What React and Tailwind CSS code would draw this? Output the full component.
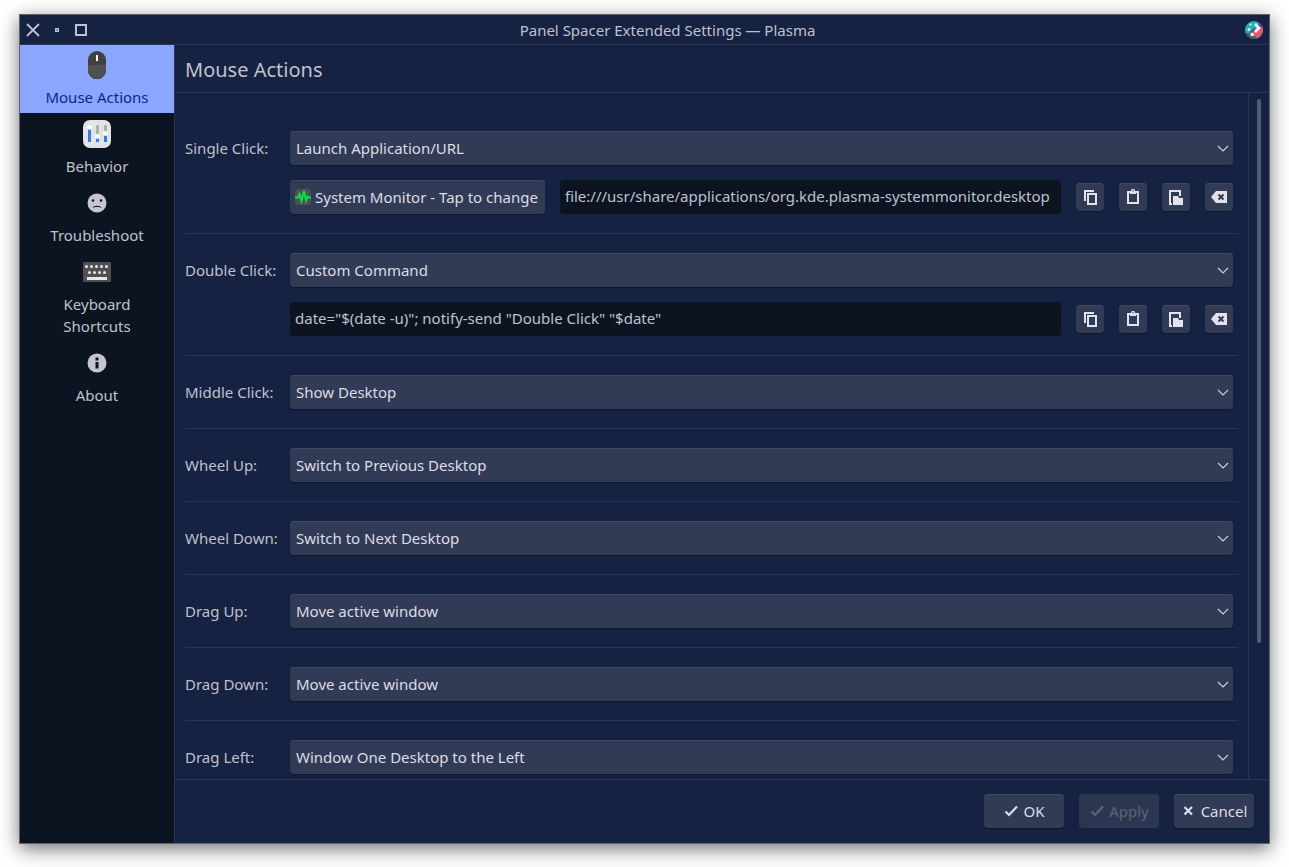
import React, { useState } from 'react';

const pages = [
  { id: 'mouse', label: 'Mouse Actions', icon: MouseIcon },
  { id: 'behavior', label: 'Behavior', icon: SlidersIcon },
  { id: 'troubleshoot', label: 'Troubleshoot', icon: SadIcon },
  { id: 'shortcuts', label: 'Keyboard Shortcuts', icon: KeyboardIcon },
  { id: 'about', label: 'About', icon: InfoIcon },
];

const actions = [
  { id: 'single', label: 'Single Click:', value: 'Launch Application/URL', app: 'System Monitor - Tap to change', command: 'file:///usr/share/applications/org.kde.plasma-systemmonitor.desktop' },
  { id: 'double', label: 'Double Click:', value: 'Custom Command', command: 'date="$(date -u)"; notify-send "Double Click" "$date"' },
  { id: 'middle', label: 'Middle Click:', value: 'Show Desktop' },
  { id: 'wheel-up', label: 'Wheel Up:', value: 'Switch to Previous Desktop' },
  { id: 'wheel-down', label: 'Wheel Down:', value: 'Switch to Next Desktop' },
  { id: 'drag-up', label: 'Drag Up:', value: 'Move active window' },
  { id: 'drag-down', label: 'Drag Down:', value: 'Move active window' },
  { id: 'drag-left', label: 'Drag Left:', value: 'Window One Desktop to the Left' },
];

/* Sidebar icons, all on a 28px box */

function MouseIcon() {
  return (
    <svg className="size-7" viewBox="0 0 28 28">
      <path d="M5 14h18v5a9 9 0 0 1-18 0z" fill="#505050" />
      <path d="M5 14V9a9 9 0 0 1 18 0v5z" fill="#404040" />
      <path d="M5.5 19.5a8.5 8.5 0 0 0 17 0" fill="none" stroke="#434343" />
      <rect x="13" y="4" width="2" height="6" fill="#fcfcfc" />
    </svg>
  );
}

function SlidersIcon() {
  return (
    <svg className="size-7" viewBox="0 0 28 28">
      <rect x="0" y="0" width="28" height="28" rx="7" fill="#e4e4e4" />
      <rect x="5" y="5" width="3" height="17" rx="1" fill="#b0b0b0" />
      <rect x="13" y="5" width="3" height="17" rx="1" fill="#b0b0b0" />
      <rect x="21" y="5" width="3" height="17" rx="1" fill="#b0b0b0" />
      <path d="M5 8h3v14H5zM13 17h3v5h-3zM21 14h3v8h-3z" fill="#2f7fe4" />
      <circle cx="6.5" cy="7.5" r="2.4" fill="#fff" />
      <circle cx="14.5" cy="16.5" r="2.4" fill="#fff" />
      <circle cx="22.5" cy="13.5" r="2.4" fill="#fff" />
    </svg>
  );
}

function SadIcon() {
  return (
    <svg className="size-7" viewBox="0 0 28 28">
      <circle cx="14" cy="14" r="9.5" fill="#c5c5d3" />
      <circle cx="10" cy="11.5" r="1.3" fill="#0d1421" />
      <circle cx="18" cy="11.5" r="1.3" fill="#0d1421" />
      <path d="M9.5 19c.5-3 8.500-3 9 0-2-1.200-7-1.200-9 0z" fill="#0d1421" />
    </svg>
  );
}

function KeyboardIcon() {
  return (
    <svg className="size-7" viewBox="0 0 28 28">
      <rect x="0" y="4" width="28" height="20" rx="1" fill="#505050" />
      {[3.5, 8.5, 13.5, 18.5, 23.5].map((x) => <circle key={x} cx={x} cy="8.5" r="1.5" fill="#e8e8e8" />)}
      {[6.5, 11.5, 16.5, 21.5].map((x) => <circle key={x} cx={x} cy="14.5" r="1.5" fill="#e8e8e8" />)}
      <rect x="4" y="19" width="20" height="3" fill="#e8e8e8" />
    </svg>
  );
}

function InfoIcon() {
  return (
    <svg className="size-7" viewBox="0 0 28 28">
      <circle cx="14" cy="14" r="9.5" fill="#c5c5d3" />
      <path d="M12.5 8.500h3v3h-3zM12.5 13h3v6.500h-3z" fill="#0d1421" />
    </svg>
  );
}

/* Button icons */

function CopyIcon() {
  return (
    <svg className="size-7" viewBox="0 0 28 28">
      <path d="M18 7H8v11h2V9h8z" fill="#e3e2ea" />
      <rect x="12" y="11" width="8" height="10" fill="none" stroke="#e3e2ea" strokeWidth="2" />
    </svg>
  );
}

function ClipboardIcon() {
  return (
    <svg className="size-7" viewBox="0 0 28 28">
      <path fillRule="evenodd" d="M12 8V7l1-1h2l1 1v1h4v13H8V8zm1.5-1v1.500h1V7zM10 10v9h8v-9h-1v1h-6v-1z" fill="#e3e2ea" />
    </svg>
  );
}

function FilePickIcon() {
  return (
    <svg className="size-7" viewBox="0 0 28 28">
      <path d="M7 7h12v6h-2V9H9v11h1v2H7z" fill="#e3e2ea" />
      <path d="M11 13h5l1 2h4v7H11z" fill="#e3e2ea" />
    </svg>
  );
}

function ClearIcon() {
  return (
    <svg className="size-7" viewBox="0 0 28 28">
      <path d="M6 14l5-6h11v12H11z" fill="#e3e2ea" />
      <path d="M13.5 11.500l5 5M18.5 11.500l-5 5" stroke="#323b56" strokeWidth="2" />
    </svg>
  );
}

function SystemMonitorIcon() {
  return (
    <svg className="size-4 shrink-0" viewBox="0 0 16 16">
      <rect width="16" height="16" rx="4" fill="#505050" />
      <path d="M1 4.500h14M0 8.500h16M1 12.500h14" stroke="#45583f" />
      <path d="M0 8.500h3l1.500-3.500 2 7L9 2l2 9.500 1.500-4 .8 1H16" fill="none" stroke="#08e04b" strokeWidth="2" />
    </svg>
  );
}

function CheckIcon() {
  return (
    <svg className="size-4" viewBox="0 0 16 16">
      <path d="M2.500 8.500l3.500 3.500L14 3.500" fill="none" stroke="currentColor" strokeWidth="2.2" />
    </svg>
  );
}

function CrossIcon() {
  return (
    <svg className="size-4" viewBox="0 0 16 16">
      <path d="M3.500 4l7.500 7.500M11 4l-7.500 7.500" fill="none" stroke="currentColor" strokeWidth="2.2" />
    </svg>
  );
}

function PlasmaLogo() {
  return (
    <svg className="size-[18px]" viewBox="0 0 18 18">
      <defs>
        <clipPath id="logo-disc"><circle cx="9" cy="9" r="9" /></clipPath>
      </defs>
      <g clipPath="url(#logo-disc)">
        <rect width="18" height="18" fill="#1fb4bd" />
        <path d="M13 0h5v8l-4-1z" fill="#93308a" />
        <path d="M18 6v12h-6L7 12l6-4z" fill="#e5566d" />
        <path d="M0 12l6 0 7 6H0z" fill="#47605c" />
        <path d="M11 8l-4 4-2-1 4-4z" fill="#93308a" />
      </g>
      <path d="M10 3l4 4-4 4" fill="none" stroke="#fff" strokeWidth="2.6" />
      <circle cx="5.5" cy="3.5" r="1" fill="#fff" />
      <circle cx="4" cy="8.5" r="1.3" fill="#fff" />
      <circle cx="7.2" cy="13.5" r="1.8" fill="#fff" />
    </svg>
  );
}

function TitleBar() {
  return (
    <header className="flex h-[30px] items-center border-b border-[#26345a] px-1">
      <div className="flex gap-1.5 text-[#c0c0d0]">
        <button aria-label="Close">
          <svg className="size-[18px]" viewBox="0 0 18 18">
            <path d="M3 3l12 12M15 3L3 15" stroke="currentColor" strokeWidth="1.8" />
          </svg>
        </button>
        <button aria-label="Minimize">
          <svg className="size-[18px]" viewBox="0 0 18 18">
            <rect x="7" y="7" width="4" height="4" fill="currentColor" />
            <rect x="8" y="8" width="2" height="2" fill="#8b8fa5" />
          </svg>
        </button>
        <button aria-label="Maximize">
          <svg className="size-[18px]" viewBox="0 0 18 18">
            <rect x="4" y="4" width="10" height="10" fill="none" stroke="currentColor" strokeWidth="2" />
          </svg>
        </button>
      </div>
      <div className="flex-1 truncate text-center">Panel Spacer Extended Settings — Plasma</div>
      <div className="pr-0.5">
        <PlasmaLogo />
      </div>
    </header>
  );
}

function Sidebar({ current, onSelect }) {
  return (
    <nav className="flex w-[155px] shrink-0 flex-col gap-px border-r border-[#26345a] bg-[#0d1421]">
      {pages.map(({ id, label, icon: Icon }) => (
        <button
          key={id}
          onClick={() => onSelect(id)}
          className={`flex flex-col items-center gap-[7px] px-6 pt-1.5 pb-[5px] leading-[22px] ${
            id === current ? 'bg-[#8aa6ff] text-[#0a2a80]' : 'text-[#c0c0ce]'
          }`}
        >
          <Icon />
          <span>{label}</span>
        </button>
      ))}
    </nav>
  );
}

function IconButton({ label, children }) {
  return (
    <button aria-label={label} className="size-7 shrink-0 rounded-[4px] bg-[#323b56] shadow-[inset_0_1px_0_#3f4862,0_1px_1px_#10182f]">
      {children}
    </button>
  );
}

function ActionRow({ action }) {
  return (
    <div className="grid grid-cols-[105px_1fr] gap-y-[15px] border-b border-[#26335a] py-[19px] pr-[5px]">
      <label id={`${action.id}-label`} htmlFor={action.id} className="self-center">
        {action.label}
      </label>
      <div className="relative">
        <select
          id={action.id}
          className="block h-[34px] w-full appearance-none rounded-[4px] bg-[#323b56] px-1.5 text-[#dddce5] shadow-[inset_0_1px_0_#3f4862,0_1px_1px_#10182f]"
        >
          <option>{action.value}</option>
        </select>
        <svg className="pointer-events-none absolute top-3 right-1 h-3 w-3" viewBox="0 0 12 12">
          <path d="M1 3l5 5 5-5" fill="none" stroke="#d0d0db" strokeWidth="1.1" />
        </svg>
      </div>
      {action.command && (
        <div className="col-start-2 flex items-center gap-[15px]">
          {action.app && (
            <button className="flex h-[34px] shrink-0 items-center gap-1 rounded-[4px] bg-[#323b56] pr-[7px] pl-[5px] text-[#dddce5] shadow-[inset_0_1px_0_#3f4862,0_1px_1px_#10182f]">
              <SystemMonitorIcon />
              {action.app}
            </button>
          )}
          <input
            type="text"
            aria-labelledby={`${action.id}-label`}
            defaultValue={action.command}
            className="h-[34px] min-w-0 flex-1 rounded-[4px] bg-[#0d1421] px-[5px] pb-0.5"
          />
          <IconButton label="Copy"><CopyIcon /></IconButton>
          <IconButton label="Paste"><ClipboardIcon /></IconButton>
          <IconButton label="Choose file"><FilePickIcon /></IconButton>
          <IconButton label="Clear"><ClearIcon /></IconButton>
        </div>
      )}
    </div>
  );
}

function DialogButton({ icon: Icon, disabled, children }) {
  return (
    <button
      disabled={disabled}
      className="flex h-[34px] w-20 items-center justify-center gap-1 rounded-[4px] bg-[#323b56] text-[#dddce5] shadow-[inset_0_1px_0_#3f4862,0_1px_1px_#10182f] disabled:bg-[#2d3651] disabled:text-[#5d6479] disabled:shadow-none"
    >
      <Icon />
      {children}
    </button>
  );
}

export default function App() {
  const [page, setPage] = useState('mouse');

  return (
    <div className="h-screen bg-white px-[19px] pt-3.5 pb-[23px] font-['Noto_Sans',sans-serif] text-[15px] leading-[22px] text-[#c0c0ce]">
      <div className="flex h-full flex-col border border-[#5b6270] bg-[#162241] shadow-[0_5px_18px_rgba(0,0,0,0.55)]">
        <TitleBar />
        <div className="flex min-h-0 flex-1">
          <Sidebar current={page} onSelect={setPage} />
          <main className="flex min-w-0 flex-1 flex-col">
            <h1 className="border-b border-[#26345a] px-2.5 pt-[11px] pb-2 text-xl">Mouse Actions</h1>
            <div className="flex min-h-0 flex-1">
              <div className="min-w-0 flex-1 overflow-hidden border-r border-[#26335a] pt-[19px] pr-2.5 pl-2.5">
                {actions.map((action) => <ActionRow key={action.id} action={action} />)}
              </div>
              <div className="w-5 px-2 pt-1.5">
                <div className="h-4/5 w-1 rounded-full bg-[#535c77]" />
              </div>
            </div>
            <footer className="flex justify-end gap-[15px] border-t border-[#26345a] px-[15px] pt-3.5 pb-[15px]">
              <DialogButton icon={CheckIcon}>OK</DialogButton>
              <DialogButton icon={CheckIcon} disabled>Apply</DialogButton>
              <DialogButton icon={CrossIcon}>Cancel</DialogButton>
            </footer>
          </main>
        </div>
      </div>
    </div>
  );
}
